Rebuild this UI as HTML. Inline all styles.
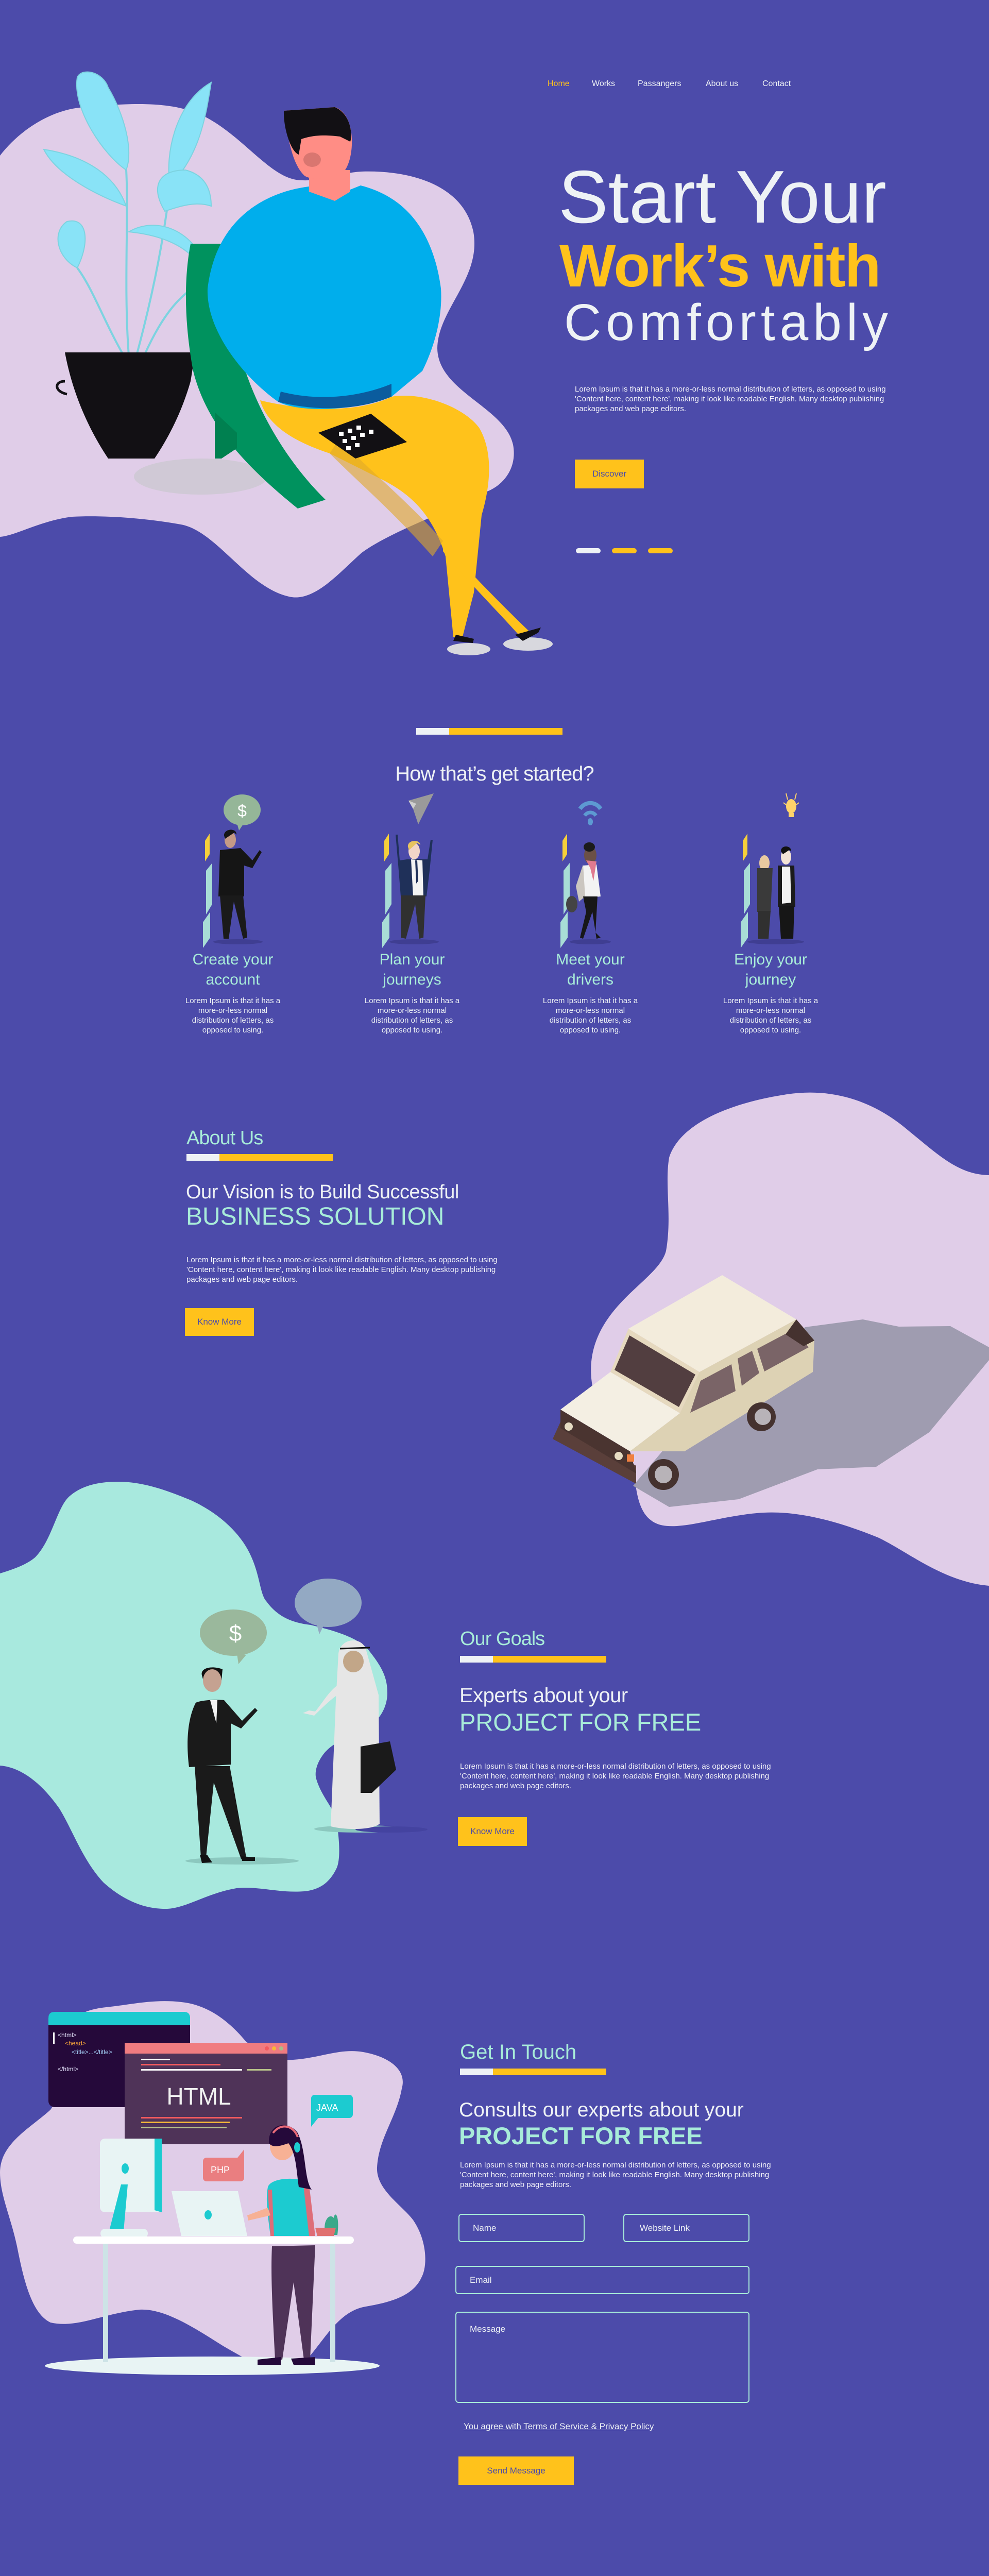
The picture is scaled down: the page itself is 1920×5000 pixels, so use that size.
<!DOCTYPE html>
<html><head><meta charset="utf-8"><style>
*{margin:0;padding:0;box-sizing:border-box}
body{width:1920px;height:5000px;background:#4c4baa;position:relative;overflow:hidden;font-family:"Liberation Sans",sans-serif;color:#eef2f5}
.a{position:absolute;white-space:nowrap;line-height:1}
.p{position:absolute;font-size:15px;line-height:19px;width:650px;color:#f2f2f8}
.btn{position:absolute;background:#ffc21b;color:#4c4baa;display:flex;align-items:center;justify-content:center;font-size:17px}
.bar{position:absolute;height:13px;background:#ffc21b}
.bar i{position:absolute;left:0;top:0;height:100%;width:64px;background:#eef2f5}
.mint{color:#a8ecd9}
.st{position:absolute;width:240px;text-align:center}
.st h3{font-weight:normal;font-size:30px;line-height:39px;color:#a8ecd9}
.st p{font-size:15px;line-height:19px;margin-top:12px;padding:0 22px}
.in{position:absolute;border:2px solid #a8ecd9;border-radius:6px;font-size:17px;color:#eef2f5;padding-left:26px;display:flex;align-items:center}
</style></head><body>
<svg width="1920" height="5000" style="position:absolute;left:0;top:0">
<path d="M0 302 C40 250 100 215 154 209 C250 200 330 195 393 224 C470 262 520 340 575 349 C620 355 660 335 702 333 C800 330 900 360 919 450 C935 540 850 600 849 676 C850 760 980 790 996 863 C1005 910 975 945 940 956 C880 990 760 1030 702 1073 C660 1110 610 1170 561 1158 C480 1140 420 1030 351 1018 C280 1005 200 1000 140 1003 C80 1010 30 1040 0 1042 Z" fill="#e0cde8"/>
<g fill="#89e3f7" stroke="#7dd3e0" stroke-width="2">
<path d="M250 690 C240 560 250 420 245 330" fill="none" stroke-width="4"/>
<path d="M265 690 C300 560 320 450 330 360" fill="none" stroke-width="4"/>
<path d="M240 690 C200 620 180 560 150 520" fill="none" stroke-width="4"/>
<path d="M280 690 C320 600 360 560 410 540" fill="none" stroke-width="4"/>
<path d="M245 330 C200 300 140 210 150 150 C160 130 200 140 210 170 C240 220 260 290 245 330Z"/>
<path d="M330 360 C320 300 340 200 410 160 C400 220 390 300 330 360Z"/>
<path d="M245 400 C190 380 110 340 85 290 C150 300 220 330 245 400Z"/>
<path d="M320 410 C290 360 310 330 360 330 C400 340 410 370 410 400 C380 390 350 400 320 410Z"/>
<path d="M150 520 C110 500 100 450 130 430 C170 420 175 470 150 520Z"/>
<path d="M410 540 C380 500 350 460 250 450 C300 420 380 440 410 540Z"/>
</g>
<path d="M126 684 L379 684 L370 740 C350 810 320 860 300 890 L210 890 C170 830 140 760 126 684Z" fill="#121014"/>
<path d="M126 740 C105 740 105 760 130 765" fill="none" stroke="#121014" stroke-width="5"/>
<ellipse cx="390" cy="925" rx="130" ry="35" fill="#d0c9d6"/>
<path d="M370 473 L450 473 L470 700 C500 800 560 900 632 970 L578 987 C470 900 400 820 375 720 C360 640 355 550 370 473Z" fill="#00925e"/>
<path d="M417 800 L460 840 L460 870 L430 890 L417 890Z" fill="#008050"/>
<path d="M505 777 C600 800 700 800 760 770 C820 760 900 790 930 830 C960 880 950 950 935 1000 L920 1150 L898 1236 L880 1236 L865 1080 C840 1000 800 960 740 930 L640 880 C580 860 520 830 505 777Z" fill="#ffc21b"/>
<path d="M860 1050 C900 1100 980 1180 1030 1228 L1005 1230 C960 1180 900 1120 860 1070Z" fill="#ffc21b"/>
<path d="M660 850 C700 900 780 960 860 1050 L840 1080 C760 990 700 940 640 880Z" fill="#e0a82a" opacity=".6"/>
<path d="M403 560 C420 420 520 372 600 362 L650 380 L700 360 C780 380 840 440 856 560 C860 620 840 680 820 720 L760 770 C680 800 580 800 540 780 C470 730 400 640 403 560Z" fill="#00aeec"/>
<path d="M540 780 C620 800 700 795 760 770 L760 745 C700 770 620 780 545 760Z" fill="#0b5c9e"/>
<path d="M600 372 L650 390 L680 372 L680 330 L600 330Z" fill="#ff8d85"/>
<path d="M551 215 L650 208 C690 220 690 300 670 330 C640 350 600 350 590 340 C570 320 560 280 551 215Z" fill="#ff8d85"/>
<path d="M551 215 L650 208 C680 220 685 260 680 275 L660 265 C620 260 600 265 585 270 L580 300 C565 295 550 250 551 215Z" fill="#121014"/>
<ellipse cx="606" cy="310" rx="17" ry="14" fill="#d97670"/>
<path d="M618 840 L720 803 L790 858 L690 890Z" fill="#121014"/>
<g fill="#fff"><rect x="658" y="838" width="9" height="8"/><rect x="675" y="832" width="9" height="8"/><rect x="692" y="826" width="9" height="8"/><rect x="665" y="852" width="9" height="8"/><rect x="682" y="846" width="9" height="8"/><rect x="699" y="840" width="9" height="8"/><rect x="716" y="834" width="9" height="8"/><rect x="672" y="866" width="9" height="8"/><rect x="689" y="860" width="9" height="8"/></g>
<ellipse cx="910" cy="1260" rx="42" ry="12" fill="#d8d8de"/>
<ellipse cx="1025" cy="1250" rx="48" ry="13" fill="#d8d8de"/>
<path d="M885 1232 L920 1240 L918 1248 L880 1244Z M1000 1232 L1050 1218 L1045 1228 L1015 1244Z" fill="#121014"/>
<rect x="1118" y="1064" width="48" height="10" rx="5" fill="#eef2f5"/>
<rect x="1188" y="1064" width="48" height="10" rx="5" fill="#ffc21b"/>
<rect x="1258" y="1064" width="48" height="10" rx="5" fill="#ffc21b"/>

<g transform="translate(452,1540)">
<path d="M-54 92 L-45 78 L-45 118 L-54 132Z" fill="#f6cf3a"/><path d="M-52 150 L-40 135 L-40 215 L-52 235Z M-58 250 L-44 230 L-44 280 L-58 300Z" fill="#a8ddd6"/>
<ellipse cx="18" cy="32" rx="36" ry="30" fill="#95b698"/><path d="M8 58 L12 72 L20 60Z" fill="#95b698"/><text x="18" y="45" font-size="32" fill="#fff" text-anchor="middle" font-family="Liberation Sans">$</text>
<ellipse cx="-5" cy="90" rx="11" ry="16" fill="#c49a86"/><path d="M-17 82 C-18 68 8 66 7 80 L3 76 L-15 88Z" fill="#151515"/>
<path d="M-25 110 L15 106 L38 130 L52 110 L56 114 L38 145 L22 140 L22 200 L-28 200 Z" fill="#151515"/>
<path d="M-25 198 L20 198 L28 280 L20 282 L2 210 L-8 282 L-18 282Z" fill="#1a1a1a"/>
<ellipse cx="10" cy="288" rx="48" ry="5" fill="#3f3e92"/>
</g>
<g transform="translate(800,1540)">
<path d="M-54 92 L-45 78 L-45 118 L-54 132Z" fill="#f6cf3a"/><path d="M-52 150 L-40 135 L-40 215 L-52 235Z M-58 250 L-44 230 L-44 280 L-58 300Z" fill="#a8ddd6"/>
<path d="M-7 14 L42 0 L12 60 L2 30Z" fill="#9a9a9a"/><path d="M-7 14 L2 30 L8 20Z" fill="#cfcfcf"/>
<ellipse cx="4" cy="112" rx="11" ry="16" fill="#f3d6c8"/><path d="M-8 104 C-10 90 15 88 16 100 L10 96 L-6 110Z" fill="#e8c460"/>
<path d="M-32 80 L-28 80 L-24 130 L-10 128 L20 128 L30 128 L36 90 L40 90 L34 150 L28 200 L-22 200 L-26 150Z" fill="#1f3059"/>
<path d="M-2 128 L20 130 L22 200 L2 200Z" fill="#f3f3f3"/><path d="M6 130 L10 130 L12 170 L8 175Z" fill="#1f3059"/>
<path d="M-22 198 L26 198 L22 280 L14 282 L6 215 L-12 282 L-22 280Z" fill="#303030"/>
<ellipse cx="4" cy="288" rx="48" ry="5" fill="#3f3e92"/>
</g>
<g transform="translate(1146,1540)">
<path d="M-54 92 L-45 78 L-45 118 L-54 132Z" fill="#f6cf3a"/><path d="M-52 150 L-40 135 L-40 215 L-52 235Z M-58 250 L-44 230 L-44 280 L-58 300Z" fill="#a8ddd6"/>
<path d="M-20 30 C-10 15 10 15 20 30" fill="none" stroke="#5d9ad2" stroke-width="8"/><path d="M-11 43 C-5 35 5 35 11 43" fill="none" stroke="#5d9ad2" stroke-width="7"/><ellipse cx="0" cy="55" rx="5" ry="7" fill="#5d9ad2"/>
<ellipse cx="0" cy="120" rx="12" ry="17" fill="#6b5046"/><ellipse cx="-2" cy="104" rx="11" ry="9" fill="#1b1b1b"/>
<path d="M-14 140 L12 138 L20 200 L-18 204Z" fill="#f3f3f3"/><path d="M-14 138 L-28 180 L-22 210 L-10 200Z" fill="#cbc6c0"/><path d="M-8 130 L12 132 L6 170 L0 145Z" fill="#e07a90"/>
<ellipse cx="-36" cy="215" rx="11" ry="16" fill="#444"/>
<path d="M-14 200 L14 200 L10 270 L20 280 L12 282 L4 230 L-14 282 L-20 280 L-8 230Z" fill="#171717"/>
<ellipse cx="0" cy="288" rx="40" ry="5" fill="#3f3e92"/>
</g>
<g transform="translate(1496,1540)">
<path d="M-54 92 L-45 78 L-45 118 L-54 132Z" fill="#f6cf3a"/><path d="M-52 150 L-40 135 L-40 215 L-52 235Z M-58 250 L-44 230 L-44 280 L-58 300Z" fill="#a8ddd6"/>
<ellipse cx="40" cy="25" rx="10" ry="14" fill="#ffd36a"/><rect x="35" y="38" width="10" height="8" fill="#ffd36a"/><path d="M30 0 L33 12 M50 0 L47 12 M25 18 L30 22 M55 18 L50 22" stroke="#ffd36a" stroke-width="2"/>
<ellipse cx="-12" cy="135" rx="10" ry="15" fill="#e9c9a0"/><path d="M-26 145 L4 145 L0 230 L-26 230Z" fill="#3a3a3a"/>
<path d="M-24 228 L0 228 L-4 282 L-24 282Z" fill="#303030"/>
<ellipse cx="30" cy="123" rx="10" ry="15" fill="#f3e3d6"/><path d="M20 112 C20 100 40 100 40 112 L36 110 L24 118Z" fill="#111"/>
<path d="M14 140 L46 140 L48 220 L14 220Z" fill="#1b1b1b"/><path d="M22 142 L38 142 L40 212 L22 214Z" fill="#f3f3f3"/>
<path d="M16 218 L46 218 L44 282 L20 282Z" fill="#161616"/>
<ellipse cx="10" cy="288" rx="55" ry="5" fill="#3f3e92"/>
</g>

<path d="M1299 2247 C1320 2180 1420 2140 1528 2124 C1620 2110 1700 2140 1763 2194 C1820 2240 1860 2280 1920 2281 L1920 3078 C1830 3070 1760 3010 1704 2984 C1620 2950 1540 2930 1469 2937 C1380 2945 1300 2980 1264 2951 C1235 2930 1235 2880 1229 2850 C1180 2780 1130 2700 1153 2616 C1180 2520 1280 2480 1293 2428 C1305 2360 1290 2300 1299 2247Z" fill="#e0cde8"/>
<path d="M1563 2576 L1675 2561 L1745 2575 L1845 2574 L1920 2615 L1920 2640 L1804 2780 L1701 2847 L1587 2852 L1434 2910 L1299 2925 L1229 2884 L1300 2800Z" fill="#9f9cb0"/>
<path d="M1073 2793 L1088 2760 L1235 2845 L1235 2880Z" fill="#5a3f3a"/>
<path d="M1088 2736 L1185 2663 L1320 2743 L1223 2817Z" fill="#f4efe3"/>
<path d="M1088 2736 L1223 2817 L1235 2860 L1088 2772Z" fill="#4a3430"/>
<path d="M1185 2663 L1220 2579 L1358 2663 L1320 2743Z" fill="#e6d9bf"/>
<path d="M1193 2659 L1222 2592 L1350 2668 L1318 2731Z" fill="#523e40"/>
<path d="M1220 2579 L1402 2475 L1546 2561 L1358 2663Z" fill="#f3ecdc"/>
<path d="M1358 2663 L1546 2561 L1581 2602 L1578 2663 L1329 2817 L1223 2817 L1320 2743Z" fill="#ddd2b4"/>
<path d="M1360 2680 L1420 2648 L1428 2700 L1340 2742Z M1432 2637 L1460 2622 L1474 2665 L1440 2690Z M1470 2618 L1540 2581 L1570 2615 L1484 2662Z" fill="#7a6467"/>
<path d="M1525 2590 L1546 2561 L1581 2602 L1560 2613Z" fill="#45322f"/>
<circle cx="1288" cy="2862" r="30" fill="#45322f"/><circle cx="1288" cy="2862" r="17" fill="#b8b3b8"/>
<circle cx="1478" cy="2750" r="28" fill="#45322f"/><circle cx="1481" cy="2750" r="16" fill="#b8b3b8"/>
<circle cx="1104" cy="2769" r="9" fill="#e6dcc3" stroke="#45322f" stroke-width="2"/><circle cx="1201" cy="2826" r="9" fill="#e6dcc3" stroke="#45322f" stroke-width="2"/>
<rect x="1217" y="2823" width="14" height="14" fill="#f08040"/>

<path d="M0 3054 C30 3045 55 3035 69 3022 C100 2990 110 2930 132 2907 C160 2880 200 2876 230 2876 C280 2876 330 2895 373 2913 C430 2940 470 2980 488 3022 C505 3060 505 3095 517 3108 C540 3140 570 3150 603 3154 C650 3165 700 3180 718 3206 C745 3240 752 3260 752 3286 C752 3315 735 3340 718 3349 C680 3370 650 3380 631 3401 C615 3420 610 3440 614 3453 C625 3490 650 3510 654 3539 C660 3580 660 3610 654 3625 C640 3655 620 3668 591 3671 C540 3675 500 3660 459 3665 C400 3675 360 3705 321 3705 C270 3705 230 3680 201 3654 C160 3610 140 3550 115 3510 C80 3460 40 3430 0 3427Z" fill="#a8e9de"/>
<ellipse cx="470" cy="3612" rx="110" ry="7" fill="#8cc8bf"/>
<ellipse cx="700" cy="3550" rx="90" ry="7" fill="#8cc8bf"/><ellipse cx="760" cy="3551" rx="70" ry="6" fill="#4443a0"/>
<ellipse cx="453" cy="3169" rx="65" ry="45" fill="#9ab89c"/><path d="M460 3210 L463 3230 L478 3212Z" fill="#9ab89c"/>
<text x="457" y="3185" font-size="44" fill="#fff" text-anchor="middle" font-family="Liberation Sans">$</text>
<ellipse cx="637" cy="3111" rx="65" ry="47" fill="#93a9c3"/><path d="M614 3150 L620 3172 L630 3152Z" fill="#93a9c3"/>
<path d="M392 3252 C388 3238 410 3232 432 3240 L430 3262 L396 3266Z" fill="#111"/>
<ellipse cx="412" cy="3262" rx="18" ry="22" fill="#c5a291"/>
<path d="M380 3305 C390 3300 420 3298 435 3300 L470 3340 L495 3315 L500 3320 L468 3355 L448 3345 L448 3425 L367 3430 C362 3390 362 3340 380 3305Z" fill="#1a1a1a"/>
<path d="M408 3300 L422 3300 L420 3345Z" fill="#f3f3f3"/>
<path d="M378 3428 L446 3428 L478 3605 L468 3608 L415 3460 L400 3605 L390 3605Z" fill="#1a1a1a"/>
<path d="M388 3600 L402 3600 L412 3615 L392 3616Z M468 3603 L495 3605 L495 3612 L470 3612Z" fill="#111"/>
<path d="M657 3210 C660 3180 700 3175 710 3200 L735 3290 L737 3540 C720 3553 670 3552 642 3545 L652 3300Z" fill="#e6e6e6"/>
<ellipse cx="686" cy="3225" rx="20" ry="21" fill="#c2a688"/><path d="M660 3200 L718 3198" stroke="#111" stroke-width="3"/>
<path d="M655 3290 C640 3300 620 3320 610 3330 L588 3325 L600 3320 L612 3322 C630 3300 640 3280 660 3268Z" fill="#e6e6e6"/>
<path d="M700 3390 L757 3380 L769 3435 L722 3480 L700 3480Z" fill="#1a1a1a"/>

<path d="M108 3952 C140 3910 170 3900 206 3896 C260 3890 300 3880 352 3886 C410 3892 450 3930 477 3962 C510 3990 540 4000 569 3998 C620 3995 660 3975 705 3983 C760 3993 790 4020 780 4054 C770 4110 735 4150 732 4207 C730 4250 780 4280 802 4309 C830 4350 830 4400 818 4421 C800 4460 750 4470 705 4478 C650 4490 620 4560 585 4590 C540 4620 480 4580 434 4554 C380 4520 320 4480 271 4483 C200 4490 150 4520 98 4508 C60 4490 45 4420 33 4360 C20 4300 0 4260 0 4217 C0 4160 60 4130 98 4095 C130 4050 90 4000 108 3952Z" fill="#e0cde8"/>
<ellipse cx="412" cy="4592" rx="325" ry="18" fill="#e8f4f4"/>
<rect x="94" y="3905" width="275" height="185" rx="12" fill="#25093a"/>
<path d="M94 3917 Q94 3905 106 3905 L357 3905 Q369 3905 369 3917 L369 3931 L94 3931Z" fill="#1ccbd0"/>
<rect x="103" y="3945" width="3" height="22" fill="#fff"/>
<text font-family="Liberation Sans" font-size="12" fill="#e8e8ff"><tspan x="112" y="3954">&lt;html&gt;</tspan><tspan x="126" y="3970" fill="#f7a43a">&lt;head&gt;</tspan><tspan x="139" y="3987" fill="#aad8ff">&lt;title&gt;...&lt;/title&gt;</tspan><tspan x="112" y="4020">&lt;/html&gt;</tspan></text>
<rect x="242" y="3965" width="316" height="197" fill="#4f3358"/>
<rect x="242" y="3965" width="316" height="21" fill="#f07c80"/>
<circle cx="518" cy="3976" r="4" fill="#f25a5e"/><circle cx="532" cy="3976" r="4" fill="#f7b938"/><circle cx="546" cy="3976" r="4" fill="#a8c08a"/>
<rect x="274" y="3996" width="56" height="3" fill="#fff"/><rect x="274" y="4006" width="154" height="3" fill="#f25a5e"/><rect x="274" y="4016" width="196" height="3" fill="#fff"/><rect x="479" y="4016" width="48" height="3" fill="#b9c48a"/>
<text x="386" y="4085" font-size="46" fill="#f0f0f0" text-anchor="middle" font-family="Liberation Sans">HTML</text>
<rect x="274" y="4109" width="196" height="3" fill="#f25a5e"/><rect x="274" y="4118" width="172" height="3" fill="#f7b938"/><rect x="274" y="4128" width="166" height="3" fill="#b9c48a"/>
<rect x="604" y="4066" width="81" height="45" rx="7" fill="#1ccbd0"/><path d="M604 4100 L604 4128 L620 4108Z" fill="#1ccbd0"/>
<text x="614" y="4097" font-size="18" fill="#fff" font-family="Liberation Sans">JAVA</text>
<rect x="394" y="4188" width="80" height="46" rx="7" fill="#ea7e80"/><path d="M474 4200 L474 4172 L458 4192Z" fill="#ea7e80"/>
<text x="409" y="4218" font-size="18" fill="#fff" font-family="Liberation Sans">PHP</text>
<rect x="194" y="4151" width="120" height="143" rx="10" fill="#e8f4f4"/><path d="M300 4151 L314 4151 L314 4294 L300 4290Z" fill="#1ccbd0"/>
<ellipse cx="243" cy="4209" rx="7" ry="10" fill="#1ccbd0"/><path d="M235 4240 L248 4240 L240 4330 L212 4330Z" fill="#1ccbd0"/><rect x="195" y="4326" width="92" height="18" rx="9" fill="#e8f4f4"/>
<path d="M333 4253 L462 4253 L480 4340 L352 4340Z" fill="#e8f4f4"/><ellipse cx="404" cy="4299" rx="7" ry="9" fill="#1ccbd0"/>
<rect x="142" y="4341" width="545" height="14" rx="7" fill="#fff"/>
<rect x="200" y="4355" width="10" height="230" fill="#cde3e6"/><rect x="641" y="4355" width="10" height="230" fill="#cde3e6"/>
<path d="M632 4338 C625 4310 640 4295 648 4305 C650 4290 660 4300 655 4338Z" fill="#3aa98a"/><path d="M612 4324 L652 4324 L648 4340 L616 4340Z" fill="#e07070"/>
<path d="M528 4360 L612 4358 L602 4580 L590 4580 L570 4430 L548 4580 L534 4580 C530 4500 525 4420 528 4360Z" fill="#4f3358"/>
<path d="M500 4580 L545 4575 L545 4590 L500 4590Z M565 4578 L612 4575 L612 4590 L570 4590Z" fill="#25093a"/>
<path d="M520 4245 C525 4230 560 4225 590 4232 L600 4290 L600 4340 L525 4340 C520 4300 515 4270 520 4245Z" fill="#1ccbd0"/>
<path d="M588 4232 L600 4240 L612 4340 L600 4340Z M520 4250 L525 4340 L532 4340 L528 4250Z" fill="#de6d78"/>
<path d="M520 4285 L480 4300 L482 4310 L525 4300Z" fill="#f7b195"/>
<ellipse cx="548" cy="4165" rx="24" ry="28" fill="#f7b195"/>
<path d="M522 4160 C520 4120 560 4115 578 4140 C595 4175 590 4230 605 4250 L580 4245 C575 4210 575 4180 560 4160 C545 4165 530 4170 522 4160Z" fill="#25093a"/>
<path d="M530 4140 C545 4120 570 4125 578 4148" fill="none" stroke="#ea6b79" stroke-width="4"/>
<ellipse cx="577" cy="4168" rx="6" ry="10" fill="#1ccbd0"/>
</svg>

<div class="a" style="left:1063px;top:155px;font-size:16px;color:#ffc21b">Home</div>
<div class="a" style="left:1149px;top:155px;font-size:16px">Works</div>
<div class="a" style="left:1238px;top:155px;font-size:16px">Passangers</div>
<div class="a" style="left:1370px;top:155px;font-size:16px">About us</div>
<div class="a" style="left:1480px;top:155px;font-size:16px">Contact</div>

<div class="a" style="left:1084px;top:310px;font-size:145px">Start Your</div>
<div class="a" style="left:1086px;top:458px;font-size:116px;font-weight:bold;color:#ffc21b;letter-spacing:-2px">Work’s with</div>
<div class="a" style="left:1095px;top:576px;font-size:100px;letter-spacing:9px">Comfortably</div>
<div class="p" style="left:1116px;top:746px">Lorem Ipsum is that it has a more-or-less normal distribution of letters, as opposed to using 'Content here, content here', making it look like readable English. Many desktop publishing packages and web page editors.</div>
<div class="btn" style="left:1116px;top:892px;width:134px;height:56px">Discover</div>

<div class="bar" style="left:808px;top:1413px;width:284px"><i></i></div>
<div class="a" style="left:0;width:1920px;text-align:center;top:1482px;font-size:40px;letter-spacing:-1px">How that’s get started?</div>
<div class="st" style="left:332px;top:1843px"><h3>Create your<br>account</h3><p>Lorem Ipsum is that it has a more-or-less normal distribution of letters, as opposed to using.</p></div>
<div class="st" style="left:680px;top:1843px"><h3>Plan your<br>journeys</h3><p>Lorem Ipsum is that it has a more-or-less normal distribution of letters, as opposed to using.</p></div>
<div class="st" style="left:1026px;top:1843px"><h3>Meet your<br>drivers</h3><p>Lorem Ipsum is that it has a more-or-less normal distribution of letters, as opposed to using.</p></div>
<div class="st" style="left:1376px;top:1843px"><h3>Enjoy your<br>journey</h3><p>Lorem Ipsum is that it has a more-or-less normal distribution of letters, as opposed to using.</p></div>

<div class="a mint" style="left:362px;top:2190px;font-size:38px;letter-spacing:-1px">About Us</div>
<div class="bar" style="left:362px;top:2240px;width:284px"><i></i></div>
<div class="a" style="left:361px;top:2295px;font-size:38px;letter-spacing:-.5px">Our Vision is to Build Successful</div>
<div class="a mint" style="left:361px;top:2338px;font-size:48px">BUSINESS SOLUTION</div>
<div class="p" style="left:362px;top:2436px">Lorem Ipsum is that it has a more-or-less normal distribution of letters, as opposed to using 'Content here, content here', making it look like readable English. Many desktop publishing packages and web page editors.</div>
<div class="btn" style="left:359px;top:2539px;width:134px;height:54px">Know More</div>

<div class="a mint" style="left:893px;top:3162px;font-size:38px;letter-spacing:-1px">Our Goals</div>
<div class="bar" style="left:893px;top:3214px;width:284px"><i></i></div>
<div class="a" style="left:892px;top:3271px;font-size:40px;letter-spacing:-.5px">Experts about your</div>
<div class="a mint" style="left:892px;top:3319px;font-size:47px">PROJECT FOR FREE</div>
<div class="p" style="left:893px;top:3419px">Lorem Ipsum is that it has a more-or-less normal distribution of letters, as opposed to using 'Content here, content here', making it look like readable English. Many desktop publishing packages and web page editors.</div>
<div class="btn" style="left:889px;top:3527px;width:134px;height:56px">Know More</div>

<div class="a mint" style="left:893px;top:3963px;font-size:40px">Get In Touch</div>
<div class="bar" style="left:893px;top:4015px;width:284px"><i></i></div>
<div class="a" style="left:891px;top:4076px;font-size:39px">Consults our experts about your</div>
<div class="a mint" style="left:891px;top:4122px;font-size:47px;font-weight:bold">PROJECT FOR FREE</div>
<div class="p" style="left:893px;top:4193px">Lorem Ipsum is that it has a more-or-less normal distribution of letters, as opposed to using 'Content here, content here', making it look like readable English. Many desktop publishing packages and web page editors.</div>
<div class="in" style="left:890px;top:4297px;width:245px;height:55px">Name</div>
<div class="in" style="left:1210px;top:4297px;width:245px;height:55px;padding-left:30px">Website Link</div>
<div class="in" style="left:884px;top:4398px;width:571px;height:55px">Email</div>
<div class="in" style="left:884px;top:4487px;width:571px;height:177px;align-items:flex-start;padding-top:22px">Message</div>
<div class="a" style="left:900px;top:4701px;font-size:17px;text-decoration:underline">You agree with Terms of Service &amp; Privacy Policy</div>
<div class="btn" style="left:890px;top:4768px;width:224px;height:55px">Send Message</div>
</body></html>
